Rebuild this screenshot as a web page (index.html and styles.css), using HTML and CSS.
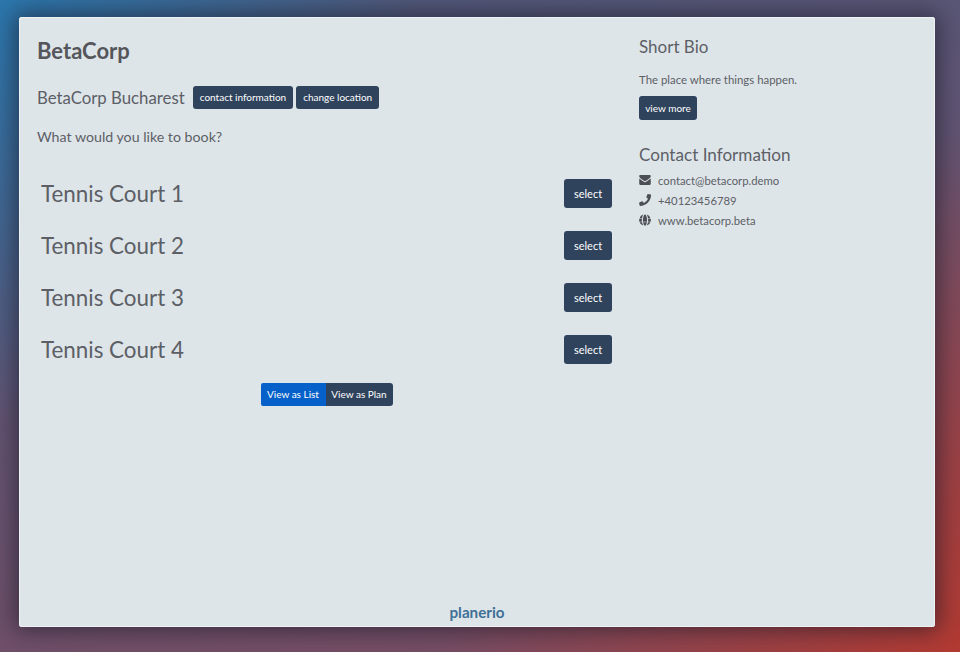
FILE: index.html
```html
<!DOCTYPE html>
<html lang="en">
  <head>
    <meta charset="UTF-8" />
    <meta name="viewport" content="width=device-width, initial-scale=1.0" />
    <title>BetaCorp</title>
    <link rel="stylesheet" href="styles.css">
  </head>
  <body>
    <div class="card">
      <div class="columns">
        <div class="main">
          <h1 class="company">BetaCorp</h1>
          <div class="location">
            <span class="location-name">BetaCorp Bucharest</span>
            <a class="btn btn-small btn-location">contact information</a>
            <a class="btn btn-small btn-location">change location</a>
          </div>
          <p class="question">What would you like to book?</p>

          <!-- bookable resources -->
          <div class="resources">
            <div class="resource">
              <span class="resource-name">Tennis Court 1</span>
              <a class="btn btn-select">select</a>
            </div>
            <div class="resource">
              <span class="resource-name">Tennis Court 2</span>
              <a class="btn btn-select">select</a>
            </div>
            <div class="resource">
              <span class="resource-name">Tennis Court 3</span>
              <a class="btn btn-select">select</a>
            </div>
            <div class="resource">
              <span class="resource-name">Tennis Court 4</span>
              <a class="btn btn-select">select</a>
            </div>
          </div>

          <div class="view-switch">
            <a class="btn btn-small switch-active">View as List</a>
            <a class="btn btn-small switch-plain">View as Plan</a>
          </div>
        </div>

        <div class="side">
          <h2 class="side-title">Short Bio</h2>
          <p class="bio">The place where things happen.</p>
          <a class="btn btn-small btn-more">view more</a>
          <h2 class="side-title contact-title">Contact Information</h2>
          <ul class="contact-list">
            <li>
              <svg class="icon" viewBox="0 0 512 512"><path d="M502 191v227c0 26-22 48-48 48H58c-26 0-48-22-48-48V191c8 9 18 17 28 24 50 34 100 69 149 105 21 15 46 34 69 34s48-19 69-34c49-36 99-71 149-105 10-7 20-15 28-24zM502 94c0 34-25 64-51 82-47 33-94 65-140 98-19 14-37 30-55 30s-36-16-55-30c-46-33-93-65-140-98C37 160 10 124 10 98c0-28 15-52 48-52h396c26 0 48 22 48 48z"/></svg>
              <span>contact@betacorp.demo</span>
            </li>
            <li>
              <svg class="icon" viewBox="0 0 512 512"><path d="M493 24 389 0c-11-3-23 3-27 14l-48 112c-4 10-1 21 7 28l61 50c-36 76-98 139-175 175l-50-61c-7-8-18-11-28-7L17 359c-11 5-17 17-14 28l24 104c2 11 12 19 23 19 256 0 464-208 464-464 0-11-8-20-21-22z"/></svg>
              <span>+40123456789</span>
            </li>
            <li>
              <svg class="icon" viewBox="0 0 512 512"><path d="M336 176c-14-86-48-160-80-160s-66 74-80 160h160zM168 256c0 25 1 47 4 72h168c3-25 4-47 4-72s-1-47-4-72H172c-3 25-4 47-4 72zM484 176C456 104 400 44 328 24c26 36 44 92 54 152h102zM184 24C112 44 56 104 28 176h102c10-60 28-116 54-152zM494 200H386c2 24 4 40 4 56s-2 48-4 72h108c8-24 14-48 14-72s-6-32-14-56zM122 256c0-16 2-32 4-56H18c-8 24-14 32-14 56s6 48 14 72h108c-2-24-4-56-4-72zM176 352c14 86 48 144 80 144s66-58 80-144H176zM28 352c28 72 84 116 156 136-26-36-44-76-54-136H28zM328 488c72-20 128-64 156-136H382c-10 60-28 100-54 136z"/></svg>
              <span>www.betacorp.beta</span>
            </li>
          </ul>
        </div>
      </div>

      <div class="footer">
        <span class="brand">planerio</span>
      </div>
    </div>
  </body>
</html>
```

FILE: styles.css
```css
* {
  box-sizing: border-box;
}

html,
body {
  height: 100%;
}

body {
  margin: 0;
  padding: 17px 25px 25px 19px;
  background-color: #5a4a66;
  background-image:
    radial-gradient(circle at 0 0, #2b77ad 0, rgba(43, 119, 173, 0) 420px),
    radial-gradient(circle at 100% 100%, #b23a32 0, rgba(178, 58, 50, 0) 520px),
    linear-gradient(165deg, #4c5a7c 0%, #625472 45%, #7d4a5e 100%);
  font-family: "Lato", "Open Sans", sans-serif;
  color: #5c5f66;
  overflow: hidden;
}

/* the white panel */
.card {
  height: 100%;
  display: flex;
  flex-direction: column;
  background-color: #dee5e9;
  border-radius: 3px;
  box-shadow: inset 0 0 0 1px #edf2f4, 0 0 22px 4px rgba(25, 25, 40, 0.6);
}

.columns {
  flex: 1;
  display: flex;
  padding: 18px 18px 0 18px;
}

.main {
  width: 575px;
  display: flex;
  flex-direction: column;
}

.side {
  margin-left: 27px;
  padding-top: 1px;
}

.company {
  margin: 0;
  font-size: 22px;
  line-height: 32px;
  font-weight: 700;
  color: #55565b;
}

.location {
  display: flex;
  align-items: center;
  gap: 3px;
  margin-top: 19px;
}

.location-name {
  font-size: 16.8px;
  margin-right: 5px;
  margin-bottom: 2px;
}

.btn-location {
  margin-bottom: 2px;
}

.question {
  margin: 17px 0 0;
  font-size: 14.2px;
  line-height: 18px;
}

.resources {
  margin-top: 21px;
}

.resource {
  display: flex;
  align-items: center;
  justify-content: space-between;
  height: 52px;
  padding-left: 4px;
}

.resource-name {
  font-size: 22.4px;
}

/* buttons */
.btn {
  display: inline-block;
  background-color: #2f435c;
  color: #ffffff;
  border-radius: 3px;
  text-align: center;
  white-space: nowrap;
}

.btn-small {
  font-size: 10px;
  line-height: 23px;
  padding: 0 7px;
}

.btn-select {
  width: 48px;
  font-size: 11px;
  line-height: 29px;
}

.btn-more {
  padding: 0;
  width: 58px;
  line-height: 24px;
}

.view-switch {
  display: flex;
  align-self: center;
  margin-top: 8px;
  margin-left: 4px;
}

.switch-active {
  width: 65px;
  padding: 0;
  background-color: #0561c9;
  border-radius: 2px 0 0 2px;
}

.switch-plain {
  width: 67px;
  padding: 0;
  border-radius: 0 3px 3px 0;
}

/* right column */
.side-title {
  margin: 0;
  font-size: 17px;
  line-height: 22px;
  font-weight: 400;
}

.bio {
  margin: 14px 0 8px;
  font-size: 11.4px;
  line-height: 16px;
}

.contact-title {
  margin-top: 24px;
  font-size: 17.1px;
}

.contact-list {
  list-style: none;
  margin: 4px 0 0;
  padding: 0;
  font-size: 11.3px;
}

.contact-list li {
  display: flex;
  align-items: center;
  gap: 7px;
  height: 20px;
}

.icon {
  width: 12px;
  height: 12px;
  fill: #4c4f55;
}

.footer {
  display: flex;
  justify-content: center;
  height: 26px;
}

.brand {
  font-size: 15.2px;
  line-height: 22px;
  font-weight: 700;
  color: #3f7096;
}
```
